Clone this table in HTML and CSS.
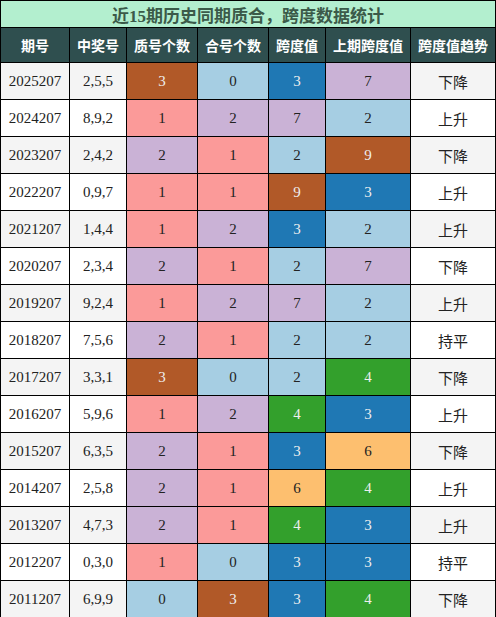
FILE: index.html
```html
<!DOCTYPE html>
<html lang="zh">
<head>
    <meta charset="UTF-8">
    <title>跨度数据统计</title>
    <link rel="stylesheet" href="styles.css">
</head>
<body>
<table class="stat">
    <colgroup>
        <col class="w69"><col class="w57"><col class="w71"><col class="w71"><col class="w57"><col class="w85"><col class="w85">
    </colgroup>
    <tr>
        <td class="title" colspan="7">近15期历史同期质合，跨度数据统计</td>
    </tr>
    <tr class="head">
        <td>期号</td><td>中奖号</td><td>质号个数</td><td>合号个数</td><td>跨度值</td><td>上期跨度值</td><td>跨度值趋势</td>
    </tr>
    <tr class="odd">
        <td>2025207</td><td>2,5,5</td><td class="brown">3</td><td class="sky">0</td><td class="blue">3</td><td class="lilac">7</td><td class="cn">下降</td>
    </tr>
    <tr>
        <td>2024207</td><td>8,9,2</td><td class="pink">1</td><td class="lilac">2</td><td class="lilac">7</td><td class="sky">2</td><td class="cn">上升</td>
    </tr>
    <tr class="odd">
        <td>2023207</td><td>2,4,2</td><td class="lilac">2</td><td class="pink">1</td><td class="sky">2</td><td class="brown">9</td><td class="cn">下降</td>
    </tr>
    <tr>
        <td>2022207</td><td>0,9,7</td><td class="pink">1</td><td class="pink">1</td><td class="brown">9</td><td class="blue">3</td><td class="cn">上升</td>
    </tr>
    <tr class="odd">
        <td>2021207</td><td>1,4,4</td><td class="pink">1</td><td class="lilac">2</td><td class="blue">3</td><td class="sky">2</td><td class="cn">上升</td>
    </tr>
    <tr>
        <td>2020207</td><td>2,3,4</td><td class="lilac">2</td><td class="pink">1</td><td class="sky">2</td><td class="lilac">7</td><td class="cn">下降</td>
    </tr>
    <tr class="odd">
        <td>2019207</td><td>9,2,4</td><td class="pink">1</td><td class="lilac">2</td><td class="lilac">7</td><td class="sky">2</td><td class="cn">上升</td>
    </tr>
    <tr>
        <td>2018207</td><td>7,5,6</td><td class="lilac">2</td><td class="pink">1</td><td class="sky">2</td><td class="sky">2</td><td class="cn">持平</td>
    </tr>
    <tr class="odd">
        <td>2017207</td><td>3,3,1</td><td class="brown">3</td><td class="sky">0</td><td class="sky">2</td><td class="green">4</td><td class="cn">下降</td>
    </tr>
    <tr>
        <td>2016207</td><td>5,9,6</td><td class="pink">1</td><td class="lilac">2</td><td class="green">4</td><td class="blue">3</td><td class="cn">上升</td>
    </tr>
    <tr class="odd">
        <td>2015207</td><td>6,3,5</td><td class="lilac">2</td><td class="pink">1</td><td class="blue">3</td><td class="orange">6</td><td class="cn">下降</td>
    </tr>
    <tr>
        <td>2014207</td><td>2,5,8</td><td class="lilac">2</td><td class="pink">1</td><td class="orange">6</td><td class="green">4</td><td class="cn">上升</td>
    </tr>
    <tr class="odd">
        <td>2013207</td><td>4,7,3</td><td class="lilac">2</td><td class="pink">1</td><td class="green">4</td><td class="blue">3</td><td class="cn">上升</td>
    </tr>
    <tr>
        <td>2012207</td><td>0,3,0</td><td class="pink">1</td><td class="sky">0</td><td class="blue">3</td><td class="blue">3</td><td class="cn">持平</td>
    </tr>
    <tr class="odd">
        <td>2011207</td><td>6,9,9</td><td class="sky">0</td><td class="brown">3</td><td class="blue">3</td><td class="green">4</td><td class="cn">下降</td>
    </tr>
</table>
</body>
</html>
```

FILE: styles.css
```css
*{
    margin: 0;
    padding: 0;
    box-sizing: border-box;
}
body{
    background: #fff;
    font-family: "Liberation Serif", "Noto Sans CJK SC", serif;
}
.stat{
    width: 496px;
    border-collapse: collapse;
    table-layout: fixed;
}
.w69{ width: 69px; }
.w57{ width: 57px; }
.w71{ width: 71px; }
.w85{ width: 85px; }
.stat td{
    border: 1px solid #000;
    text-align: center;
    height: 37px;
    font-size: 15px;
    color: #222;
    background-color: #fff;
}
.stat tr.odd td{
    background-color: #f4f4f4;
}
/*标题栏*/
.stat td.title{
    height: 27px;
    background-color: #b3efcf;
    color: #3b5a49;
    font-size: 17px;
    font-weight: bold;
    font-family: "Liberation Serif", "Noto Sans CJK SC", serif;
}
.stat tr.head td{
    height: 35px;
    background-color: #2f4f4f;
    color: #fff;
    font-size: 14px;
    font-weight: bold;
    font-family: "Noto Sans CJK SC", sans-serif;
}
.stat td.cn{
    font-family: "Noto Sans CJK SC", sans-serif;
}
/*颜色块*/
.stat tr td.brown{ background-color: #b15928; color: #eee; }
.stat tr td.sky{ background-color: #a6cee3; }
.stat tr td.blue{ background-color: #1f78b4; color: #eee; }
.stat tr td.lilac{ background-color: #cab2d6; }
.stat tr td.pink{ background-color: #fb9a99; }
.stat tr td.green{ background-color: #33a02c; color: #eee; }
.stat tr td.orange{ background-color: #fdbf6f; }
```
